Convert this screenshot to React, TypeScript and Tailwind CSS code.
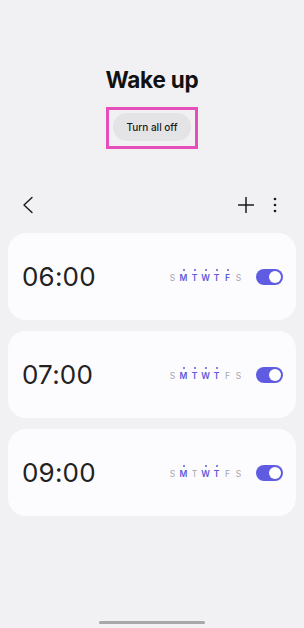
import React from "react";

const DAYS = ["S", "M", "T", "W", "T", "F", "S"];

type Alarm = { time: string; active: boolean[] };

const ALARMS: Alarm[] = [
  { time: "06:00", active: [false, true, true, true, true, true, false] },
  { time: "07:00", active: [false, true, true, true, true, false, false] },
  { time: "09:00", active: [false, true, false, true, true, false, false] },
];

function Days({ active }: { active: boolean[] }) {
  return (
    <div className="flex">
      {DAYS.map((d, i) => (
        <div key={i} className="relative w-[11px] flex justify-center">
          {active[i] && (
            <span className="absolute top-[-4px] left-1/2 -translate-x-1/2 w-[2px] h-[2px] rounded-full bg-[#5d5ad8]" />
          )}
          <span
            className={
              active[i]
                ? "text-[8.5px] leading-[10px] font-semibold text-[#5d5ad8]"
                : "text-[8.5px] leading-[10px] font-normal text-[#a5a5ad]"
            }
          >
            {d}
          </span>
        </div>
      ))}
    </div>
  );
}

function Toggle() {
  return (
    <div className="w-[27px] h-[16px] rounded-full bg-[#5f5ce2] flex items-center justify-end pr-[2px]">
      <div className="w-[12px] h-[12px] rounded-full bg-white" />
    </div>
  );
}

export default function App() {
  return (
    <div
      className="w-[304px] h-[628px] bg-[#f1f1f3] flex flex-col relative"
      style={{ fontFamily: "Inter, 'Noto Sans', sans-serif" }}
    >
      <div className="pt-[66px] flex justify-center">
        <h1 className="text-[22.5px] leading-[27px] font-bold text-[#111] tracking-[-0.2px]">Wake up</h1>
      </div>
      <div className="mt-[14px] flex justify-center">
        <div className="border-[3px] border-[#e64fb9] pt-[3px] pb-[5px] px-[4px]">
          <div className="w-[78px] h-[28px] rounded-full bg-[#e4e4e7] flex items-center justify-center">
            <span className="text-[10px] font-medium text-[#1a1a1a]">Turn all off</span>
          </div>
        </div>
      </div>
      <div className="mt-[46px] h-[20px] flex items-center pl-[22px] pr-[27px]">
        <svg width="12" height="18" viewBox="0 0 12 18" fill="none">
          <path d="M10 1.5 L2 9 L10 16.5" stroke="#1a1a1a" strokeWidth="1.4" strokeLinecap="round" strokeLinejoin="round" />
        </svg>
        <div className="flex-1" />
        <svg width="16" height="16" viewBox="0 0 16 16" fill="none">
          <path d="M8 0.5 V15.5 M0.5 8 H15.5" stroke="#1a1a1a" strokeWidth="1.5" strokeLinecap="round" />
        </svg>
        <svg className="ml-[19px]" width="4" height="16" viewBox="0 0 4 16" fill="#1a1a1a">
          <circle cx="2" cy="2" r="1.3" />
          <circle cx="2" cy="8" r="1.3" />
          <circle cx="2" cy="14" r="1.3" />
        </svg>
      </div>
      <div className="mt-[18px] px-[8px] flex flex-col gap-[11px]">
        {ALARMS.map((a, idx) => (
          <div
            key={idx}
            className="h-[87px] rounded-[18px] bg-[#fcfcfe] flex items-center pl-[14px] pr-[13px]"
          >
            <span className="text-[26px] leading-none font-normal text-[#222] tracking-[0.2px]">{a.time}</span>
            <div className="flex-1" />
            <div className="mr-[12px] mt-[2px]">
              <Days active={a.active} />
            </div>
            <Toggle />
          </div>
        ))}
      </div>
      <div className="flex-1" />
      <div className="pb-[4px] flex justify-center">
        <div className="w-[106px] h-[3px] rounded-full bg-[#a8a8aa]" />
      </div>
    </div>
  );
}
